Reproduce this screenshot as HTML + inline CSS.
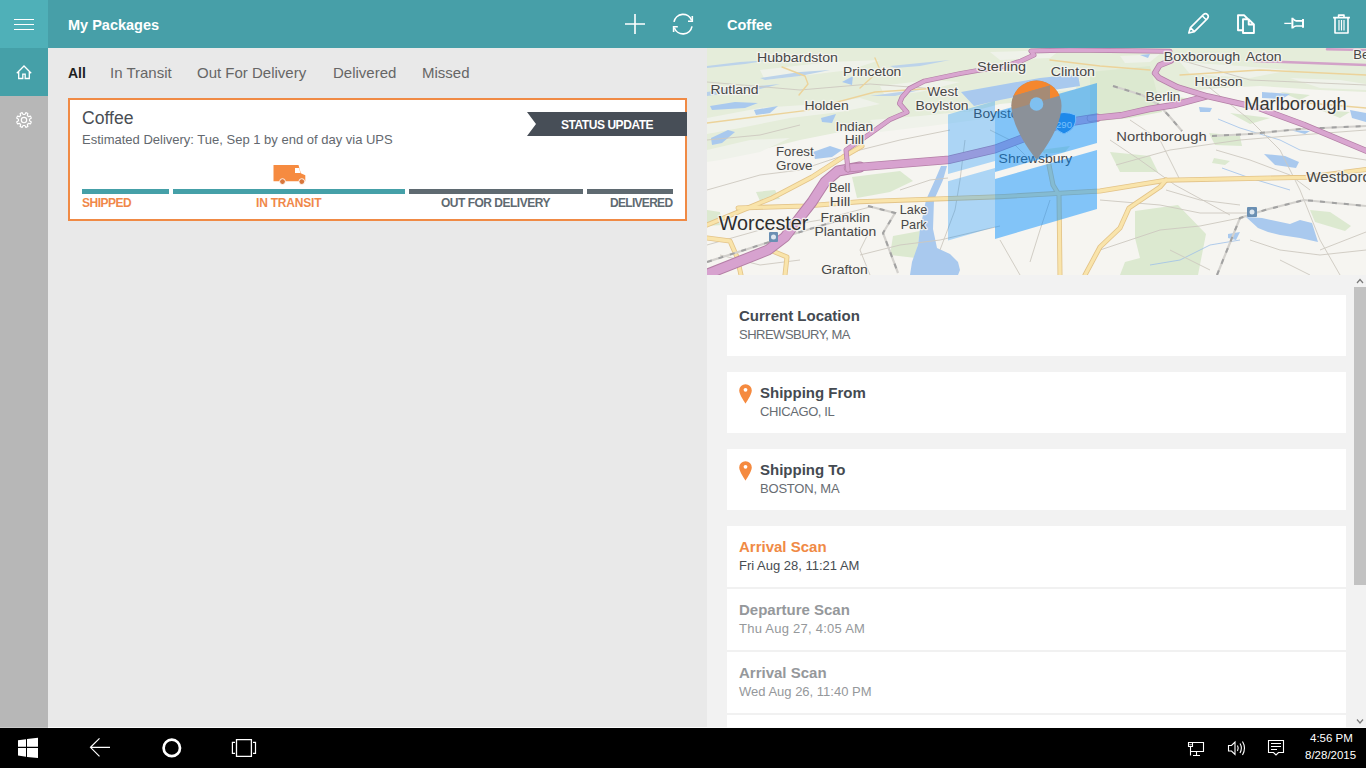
<!DOCTYPE html>
<html><head><meta charset="utf-8">
<style>
*{margin:0;padding:0;box-sizing:border-box}
html,body{width:1366px;height:768px;overflow:hidden;background:#e9e9e9;font-family:"Liberation Sans",sans-serif}
.abs{position:absolute}
.t{position:absolute;white-space:nowrap;line-height:1}
#rail{left:0;top:0;width:48px;height:728px;background:#b7b7b7}
#ham{left:0;top:0;width:48px;height:48px;background:#4fb0b8}
#home{left:0;top:48px;width:48px;height:48px;background:#45a0a8}
#hdr{left:48px;top:0;width:1318px;height:48px;background:#479fa8}
#taskbar{left:0;top:728px;width:1366px;height:40px;background:#000}
#map{left:707px;top:48px;width:659px;height:227px;background:#f4f2ee;overflow:hidden}
#det{left:707px;top:275px;width:659px;height:453px;background:#f2f2f2}
.card{position:absolute;left:727px;width:619px;background:#fff}
.lbl{font-size:15px;font-weight:bold;color:#444a51}
.sub{font-size:13px;color:#676c72}
svg{position:absolute;overflow:visible}
</style></head><body>
<div id="rail" class="abs"></div>
<div id="ham" class="abs"></div>
<div id="home" class="abs"></div>
<div id="hdr" class="abs"></div>
<div id="map" class="abs"></div>
<div id="det" class="abs"></div>
<div id="taskbar" class="abs"></div>
<div class="abs" style="left:48px;top:727px;width:1318px;height:1px;background:#fbfbfb"></div>
<div class="abs" style="left:0;top:727px;width:48px;height:1px;background:#c9c9c9"></div>

<!-- rail icons -->
<svg style="left:0;top:0" width="48" height="140" viewBox="0 0 48 140">
  <g stroke="#fff" stroke-width="1" fill="none">
    <path d="M14 19.5H34M14 24.5H34M14 29.5H34"/>
    <path d="M16.8 73.2L24 66L31.2 73.2M18.7 71.3V78.5H22.8V74.2H25.2V78.5H29.3V71.3" stroke-width="1.3"/>
  </g>
  <g fill="none" stroke="#fff" stroke-width="1.15" stroke-linejoin="round">
    <circle cx="24" cy="120" r="2.7"/>
    <path d="M24.83 114.46 L25.90 112.64 L27.86 113.45 L27.33 115.50 L28.50 116.67 L30.55 116.14 L31.36 118.10 L29.54 119.17 L29.54 120.83 L31.36 121.90 L30.55 123.86 L28.50 123.33 L27.33 124.50 L27.86 126.55 L25.90 127.36 L24.83 125.54 L23.17 125.54 L22.10 127.36 L20.14 126.55 L20.67 124.50 L19.50 123.33 L17.45 123.86 L16.64 121.90 L18.46 120.83 L18.46 119.17 L16.64 118.10 L17.45 116.14 L19.50 116.67 L20.67 115.50 L20.14 113.45 L22.10 112.64 L23.17 114.46Z"/>
  </g>
</svg>

<!-- header text & icons -->
<div class="t" style="left:68px;top:18px;font-size:14.5px;font-weight:bold;color:#fff">My Packages</div>
<div class="t" style="left:727px;top:18px;font-size:14.5px;font-weight:bold;color:#fff">Coffee</div>
<svg style="left:600px;top:0" width="110" height="48" viewBox="600 0 110 48">
  <g stroke="#fff" stroke-width="1.6" fill="none">
    <path d="M625 24H645M635 14V34"/>
    <path d="M691.6 20.2A9.2 9.2 0 0 0 674 21.8M674.3 27.8A9.2 9.2 0 0 0 692 26.4"/>
    <path d="M692.3 16V21.3H688M673.6 32V26.8H677.8" stroke-width="1.6"/>
  </g>
</svg>
<svg style="left:1180px;top:0" width="186" height="48" viewBox="1180 0 186 48">
  <g stroke="#fff" stroke-width="1.5" fill="none" stroke-linejoin="round">
    <path d="M1188.8 33L1190.4 27.6L1203.4 14.6Q1205.5 12.8 1207.5 14.6Q1209.2 16.6 1207.4 18.6L1194.4 31.6Z M1190.4 27.6L1194.4 31.6 M1202.2 15.8L1206.2 19.8" stroke-width="1.6"/>
    <path d="M1243 30.3H1238V15.2H1244L1247.8 19" stroke-width="1.9"/>
    <path d="M1243 19.3H1248.7L1253.9 24.5V33H1243Z M1248.7 19.3V24.5H1253.9" stroke-width="1.9"/>
    <path d="M1284.3 23.4H1291.5" stroke-width="1.3"/>
    <path d="M1292.4 17.8V28.6M1303 18.9V27.8" stroke-width="2"/>
    <path d="M1293 18.8Q1294.6 20.9 1296.2 20.9H1302.3M1293 27.6Q1294.6 26 1296.2 26H1302.3" stroke-width="1.6"/>
    <path d="M1333.1 17.6H1349.9M1338.6 17.6V15.1H1344V17.6M1335 17.6V33H1348V17.6" stroke-width="1.6"/>
    <path d="M1339 20V30.5M1341.5 20V30.5M1344 20V30.5" stroke-width="1.2"/>
  </g>
</svg>

<!-- tabs -->
<div class="t" style="left:68px;top:66px;font-size:14px;font-weight:bold;color:#1e1e1e">All</div>
<div class="t" style="left:110px;top:65px;font-size:15px;color:#666">In Transit</div>
<div class="t" style="left:197px;top:65px;font-size:15px;color:#666">Out For Delivery</div>
<div class="t" style="left:333px;top:65px;font-size:15px;color:#666">Delivered</div>
<div class="t" style="left:422px;top:65px;font-size:15px;color:#666">Missed</div>

<!-- package card -->
<div class="abs" style="left:68px;top:98px;width:619px;height:123px;background:#fff;border:2px solid #f08a45"></div>
<div class="t" style="left:82px;top:110px;font-size:17.6px;color:#494e54">Coffee</div>
<div class="t" style="left:82px;top:133px;font-size:13px;color:#63686e">Estimated Delivery: Tue, Sep 1 by end of day via UPS</div>
<svg style="left:520px;top:108px" width="168" height="32" viewBox="520 108 168 32">
  <path d="M527 112H687V136H527L536 124Z" fill="#474e57"/>
</svg>
<div class="t" style="left:561px;top:119px;font-size:12px;font-weight:bold;color:#fff;letter-spacing:-0.45px">STATUS UPDATE</div>
<div class="abs" style="left:82px;top:189px;width:87px;height:5px;background:#45a0a8"></div>
<div class="abs" style="left:173px;top:189px;width:232px;height:5px;background:#45a0a8"></div>
<div class="abs" style="left:409px;top:189px;width:174px;height:5px;background:#5f6a71"></div>
<div class="abs" style="left:587px;top:189px;width:86px;height:5px;background:#5f6a71"></div>
<div class="t" style="left:82px;top:196.7px;font-size:12px;font-weight:bold;color:#f0884a;letter-spacing:-0.5px">SHIPPED</div>
<div class="t" style="left:256px;top:196.7px;font-size:12px;font-weight:bold;color:#f0884a;letter-spacing:-0.2px">IN TRANSIT</div>
<div class="t" style="left:441px;top:196.7px;font-size:12px;font-weight:bold;color:#5f6a71;letter-spacing:-0.5px">OUT FOR DELIVERY</div>
<div class="t" style="left:610px;top:196.7px;font-size:12px;font-weight:bold;color:#5f6a71;letter-spacing:-0.7px">DELIVERED</div>
<svg style="left:270px;top:160px" width="40" height="28" viewBox="270 160 40 28">
  <path d="M273.5 165.1H298.5L300.8 173.3L305.3 175.3V181.3H273.5Z" fill="#f68b40"/>
  <path d="M295 168H299.3L300.3 172.9H295Z" fill="#fff"/>
  <circle cx="282.5" cy="181.6" r="2.9" fill="#d9773c" stroke="#fff" stroke-width="0.9"/>
  <circle cx="301.8" cy="181.6" r="2.9" fill="#d9773c" stroke="#fff" stroke-width="0.9"/>
</svg>

<!-- MAP -->
<svg id="mapsvg" style="left:707px;top:48px" width="659" height="227" viewBox="707 48 659 227">
<defs>
<clipPath id="mclip"><rect x="707" y="48" width="659" height="227"/></clipPath>
<clipPath id="pinclip"><path d="M1036.5 159.8C1028 149 1011.5 126 1011.5 105.5A25 25 0 0 1 1061.5 105.5C1061.5 126 1045 149 1036.5 159.8Z"/></clipPath>
</defs>
<g clip-path="url(#mclip)">
<rect x="707" y="48" width="659" height="227" fill="#f6f5f1"/>
<!-- broad green -->
<g fill="#e5edda">
<path d="M707 48H1366V92L1320 90L1260 86L1220 88L1180 92L1150 100L1120 118L1080 124L1040 100L1000 104L970 112L930 120L900 128L870 126L840 132L800 140L760 150L707 160Z"/>
</g>
<g fill="#eff2ea">
<path d="M707 118L760 108L820 104L860 98L880 104L840 112L790 118L740 128L707 134Z"/>
<path d="M760 70L830 62L880 60L850 70L800 76L765 80Z"/>
<path d="M880 86L930 80L960 82L920 92L885 96Z"/>
<path d="M707 150L750 140L790 138L760 152L720 160L707 162Z"/>
<path d="M870 120L920 116L960 112L1000 110L990 118L930 126L880 132Z"/>
<path d="M1180 62L1240 66L1290 70L1250 78L1190 74Z"/>
<path d="M1290 78L1340 80L1366 84V90L1320 88Z"/>
<path d="M1120 56L1160 54L1150 62L1125 63Z"/>
<path d="M1030 84L1080 80L1075 90L1040 92Z"/>
<path d="M990 52L1060 50L1050 58L1000 60Z"/>
</g>
<g fill="#dce9d0">
<path d="M1090 72L1150 66L1162 112L1130 118L1090 122Z"/>
<path d="M852 177L900 171L913 181L890 192L857 198Z"/>
<path d="M893 236L920 231L916 258L890 255Z"/>
<path d="M1135 211L1178 205L1206 234L1198 275H1120L1125 262L1140 258L1135 238Z"/>
<path d="M1110 152L1150 156L1158 172L1120 172Z"/>
<path d="M1310 210L1330 212L1351 226L1345 231L1315 222Z"/>
<path d="M1209 133L1240 136L1242 146L1215 145Z"/>
<path d="M1214 158L1230 161L1225 165L1212 163Z"/>
<path d="M707 210L720 212L722 225L707 226Z"/>
<path d="M756 192L775 190L780 199L760 201Z"/>
<path d="M1040 150L1070 146L1065 152L1045 154Z"/>
<path d="M1170 96L1200 100L1190 104Z"/>
<path d="M1230 113L1270 118L1250 124Z"/>
<path d="M1320 110L1350 112L1340 118Z"/>
<path d="M1280 92L1310 95L1300 100Z"/>
</g>
<!-- water -->
<g fill="#a9c9ee">
<path d="M961 92L1000 85L1040 78L1078 74L1080 86L1040 92L1000 100L974 106Z"/>
<path d="M941 166L947 166L943 180L934 200L933 229L937 248L950 254L958 262L960 270L958 275H910L912 262L918 245L920 229L926 200L935 180Z"/>
<path d="M707 92L735 88L758 86L780 84L760 89L730 93L707 96Z" fill="#b8d0ea"/>
<path d="M710 106L735 102L758 103L745 108L712 110Z"/>
<path d="M754 110L778 106L770 113L756 115Z"/>
<path d="M711 138L728 130L735 132L722 143L712 145Z"/>
<path d="M821 118L836 114L832 123L822 122Z"/>
<path d="M813 152L830 146L842 150L832 157L815 159Z"/>
<path d="M842 82L853 76L852 85Z"/>
<path d="M707 66L740 62L770 60L745 64L707 68Z" fill="#bcd3ea"/>
<path d="M760 78L800 72L830 70L800 76L765 80Z" fill="#bcd3ea"/>
<path d="M890 66L930 62L950 60L920 66L895 68Z" fill="#bcd3ea"/>
<path d="M870 96L900 92L920 90L895 96Z" fill="#bcd3ea"/>
<path d="M1246 217L1262 218L1290 224L1300 220L1312 223L1318 242L1300 238L1280 235L1268 232L1258 228Z"/>
<path d="M1264 154L1285 156L1299 162L1296 168L1275 165Z"/>
<path d="M1350 110L1366 113V122L1352 118Z"/>
<path d="M1199 107L1212 108L1210 112L1200 112Z"/>
<path d="M1228 234L1240 232L1236 240L1228 238Z"/>
<path d="M1262 92L1290 94L1282 99L1262 98Z"/>
<path d="M1140 55L1150 54L1148 58Z"/>
<path d="M1290 130L1310 131L1305 134Z"/>
</g>
<g fill="none" stroke="#9ec0ea" stroke-width="0.8">
<path d="M1218 119L1240 128L1280 140L1300 150"/>
<path d="M1222 168L1250 178L1290 190"/>
<path d="M1150 265L1180 260L1210 245L1240 240"/>
</g>
<!-- minor roads -->
<g fill="none" stroke="#cdc8bf" stroke-width="0.9">
<path d="M707 190L760 175L800 170L860 150L900 140L950 130"/>
<path d="M707 245L760 230L820 220L870 207"/>
<path d="M860 255L900 245L940 240L1000 226"/>
<path d="M1100 250L1160 230L1200 226L1240 218"/>
<path d="M1116 165L1170 150L1240 140L1300 135L1366 130"/>
<path d="M1100 200L1160 205L1200 213L1252 213"/>
<path d="M1200 80L1250 120L1280 150L1300 190L1320 240L1340 275"/>
<path d="M1300 150L1366 160"/>
<path d="M1130 120L1160 140L1180 180"/>
<path d="M1000 240L1020 275"/>
<path d="M965 140L960 180L955 210L940 250"/>
<path d="M1180 60L1250 80L1366 85"/>
<path d="M707 82L800 90L870 84L950 90"/>
<path d="M1320 250L1366 232"/>
<path d="M1280 260L1310 275"/>
<path d="M1216 150L1250 160L1290 175L1310 190"/>
<path d="M1166 190L1200 200L1240 205"/>
<path d="M1110 140L1140 160L1175 185L1230 215"/>
<path d="M870 230L860 250L870 275"/>
<path d="M720 255L760 265L800 260"/>
<path d="M900 190L930 180L948 178"/>
<path d="M1050 200L1040 230L1030 262"/>
<path d="M1250 240L1280 250L1320 255L1366 250"/>
<path d="M707 140L760 135L800 125"/>
<path d="M990 130L1010 140L1030 160"/>
<path d="M1170 250L1210 270"/>
</g>
<!-- yellow roads -->
<g fill="none" stroke-linejoin="round" stroke-linecap="round">
<g stroke="#e3c489" stroke-width="5">
<path d="M707 225L772 198L812 177L843 157L862 146"/>
<path d="M738 208L805 206L860 201.7L1000 196.7L1100 191L1166 180.2L1306 177.3L1366 169.5"/>
<path d="M707 238L730 241L737 257L741 275"/>
<path d="M770 250L787 257L785 275"/>
<path d="M1166 180L1160 187L1129 208L1120 228L1100 247L1085 275"/>
<path d="M1049 165L1053 185L1059 195L1060 275"/>
</g>
<g stroke="#f9e4ab" stroke-width="3.3">
<path d="M707 225L772 198L812 177L843 157L862 146"/>
<path d="M738 208L805 206L860 201.7L1000 196.7L1100 191L1166 180.2L1306 177.3L1366 169.5"/>
<path d="M707 238L730 241L737 257L741 275"/>
<path d="M770 250L787 257L785 275"/>
<path d="M1166 180L1160 187L1129 208L1120 228L1100 247L1085 275"/>
<path d="M1049 165L1053 185L1059 195L1060 275"/>
</g>
<g stroke="#ecd39a" stroke-width="1.4">
<path d="M707 123L805 110.6L875 92L940 88"/>
<path d="M799 95L808 84L805 76L782 67"/>
<path d="M1180 75L1260 70L1366 75"/>
<path d="M860 88L880 70L875 58"/>
<path d="M1050 60L1100 66L1150 70"/>
<path d="M1270 100L1320 104L1366 108"/>
</g>
</g>
<!-- rail -->
<g fill="none" stroke="#d3d1cd" stroke-width="2.2">
<path d="M707 262L760 245L800 232L860 214"/>
<path d="M1217 275L1240 218L1265 210L1304 200L1366 206"/>
<path d="M868 206L895 213L883 233L898 273"/>
<path d="M1113 86L1142 95L1159 105L1170 117L1182 131"/>
<path d="M1212 136L1250 134L1300 129L1366 126"/>
</g>
<g fill="none" stroke="#a2a2a2" stroke-width="2" stroke-dasharray="5 7">
<path d="M707 262L760 245L800 232L860 214"/>
<path d="M1217 275L1240 218L1265 210L1304 200L1366 206"/>
<path d="M868 206L895 213L883 233L898 273"/>
<path d="M1113 86L1142 95L1159 105L1170 117L1182 131"/>
<path d="M1212 136L1250 134L1300 129L1366 126"/>
</g>
<!-- highways -->
<g fill="none" stroke-linejoin="round" stroke-linecap="round">
<path d="M700 277L768 250L785 237L798 220L812 202L825 182L838 171L860 167" stroke="#b47fa6" stroke-width="11"/>
<path d="M700 277L768 250L785 237L798 220L812 202L825 182L838 171L860 167" stroke="#d7a2cf" stroke-width="9"/>
<path d="M848 168L860 167L949.6 159.7L995 149L1040 132L1063.7 123L1097 117.7" stroke="#b47fa6" stroke-width="8.5"/>
<path d="M848 168L860 167L949.6 159.7L995 149L1040 132L1063.7 123L1097 117.7" stroke="#d7a2cf" stroke-width="7"/>
<path d="M1090 118.4L1121 115.3L1149 109L1174 105L1205.6 96.6" stroke="#b47fa6" stroke-width="6.5"/>
<path d="M1090 118.4L1121 115.3L1149 109L1174 105L1205.6 96.6" stroke="#d7a2cf" stroke-width="5.2"/>
<path d="M848 170L846 150L870 133.7L889.6 119.7L907 112.2L899.5 103.5L902 97.3L909.5 88.6L924.4 81.1L960 73.6L977 70.6L1006 66L1021 61L1034 55L1031 51L1070 50L1170 51.3" stroke="#b47fa6" stroke-width="5"/>
<path d="M848 170L846 150L870 133.7L889.6 119.7L907 112.2L899.5 103.5L902 97.3L909.5 88.6L924.4 81.1L960 73.6L977 70.6L1006 66L1021 61L1034 55L1031 51L1070 50L1170 51.3" stroke="#d9a6d0" stroke-width="3.6"/>
<path d="M1171 60.6L1159.5 65.3L1154.8 73.1L1158.8 77.8L1177.5 87.2L1207.7 96.3L1257 107.5L1304 124.7L1370 152.5" stroke="#b47fa6" stroke-width="6"/>
<path d="M1171 60.6L1159.5 65.3L1154.8 73.1L1158.8 77.8L1177.5 87.2L1207.7 96.3L1257 107.5L1304 124.7L1370 152.5" stroke="#d9a6d0" stroke-width="4.5"/>
<path d="M1254 61L1366 65M1327 49.2L1366 50" stroke="#d2a2c8" stroke-width="2.5"/>
</g>
<!-- labels -->
<g font-family="Liberation Sans, sans-serif" font-size="13" fill="#474747" stroke="#f6f5f1" stroke-width="2.5" stroke-opacity="0.85" paint-order="stroke" stroke-linejoin="round">
<text x="757" y="61.8" textLength="81" lengthAdjust="spacingAndGlyphs">Hubbardston</text>
<text x="843" y="75.6" textLength="58.3" lengthAdjust="spacingAndGlyphs">Princeton</text>
<text x="977" y="71" textLength="49" lengthAdjust="spacingAndGlyphs">Sterling</text>
<text x="710.5" y="94" textLength="48" lengthAdjust="spacingAndGlyphs">Rutland</text>
<text x="927.3" y="95.5" textLength="30.7" lengthAdjust="spacingAndGlyphs">West</text>
<text x="915.4" y="110" textLength="53.2" lengthAdjust="spacingAndGlyphs">Boylston</text>
<text x="804.4" y="109.8" textLength="44.3" lengthAdjust="spacingAndGlyphs">Holden</text>
<text x="835.6" y="130.6" textLength="37.6" lengthAdjust="spacingAndGlyphs">Indian</text>
<text x="844.8" y="144.4" textLength="19.2" lengthAdjust="spacingAndGlyphs">Hill</text>
<text x="776" y="155.7" textLength="37.6" lengthAdjust="spacingAndGlyphs">Forest</text>
<text x="776" y="169.8" textLength="36.6" lengthAdjust="spacingAndGlyphs">Grove</text>
<text x="828.9" y="191.8" textLength="21.4" lengthAdjust="spacingAndGlyphs">Bell</text>
<text x="829.8" y="206" textLength="20.5" lengthAdjust="spacingAndGlyphs">Hill</text>
<text x="820.6" y="221.8" textLength="49.4" lengthAdjust="spacingAndGlyphs">Franklin</text>
<text x="814.5" y="236.1" textLength="61.8" lengthAdjust="spacingAndGlyphs">Plantation</text>
<text x="899.8" y="214" textLength="27.5" lengthAdjust="spacingAndGlyphs">Lake</text>
<text x="900.7" y="228.5" textLength="26" lengthAdjust="spacingAndGlyphs">Park</text>
<text x="821.2" y="274.4" textLength="46.5" lengthAdjust="spacingAndGlyphs">Grafton</text>
<text x="1050.8" y="75.6" textLength="44.1" lengthAdjust="spacingAndGlyphs">Clinton</text>
<text x="1163.7" y="61" textLength="76.5" lengthAdjust="spacingAndGlyphs">Boxborough</text>
<text x="1245.7" y="61" textLength="35.8" lengthAdjust="spacingAndGlyphs">Acton</text>
<text x="1353.3" y="59">Be</text>
<text x="1194.6" y="86.3" textLength="48.1" lengthAdjust="spacingAndGlyphs">Hudson</text>
<text x="1145.4" y="101" textLength="35.1" lengthAdjust="spacingAndGlyphs">Berlin</text>
<text x="1116.3" y="141.4" textLength="90.3" lengthAdjust="spacingAndGlyphs">Northborough</text>
<text x="1306.3" y="181.8" textLength="90" lengthAdjust="spacingAndGlyphs" font-size="14">Westborough</text>
<text x="718.8" y="230" font-size="19.5" fill="#2e2e2e" textLength="89.6" lengthAdjust="spacingAndGlyphs">Worcester</text>
<text x="1244.2" y="110.2" font-size="17.5" fill="#363636" textLength="102.5" lengthAdjust="spacingAndGlyphs">Marlborough</text>
<text x="973.2" y="117.8" textLength="53" lengthAdjust="spacingAndGlyphs">Boylston</text>
<text x="998.6" y="163.3" textLength="73.6" lengthAdjust="spacingAndGlyphs">Shrewsbury</text>
</g>
<!-- station icons -->
<rect x="1247" y="207" width="10" height="10" rx="1" fill="#6a8fb3"/>
<rect x="1249.5" y="209.5" width="5" height="5" rx="2.5" fill="#dde7f0"/>
<rect x="769" y="232" width="9" height="10" rx="1" fill="#6a8fb3"/>
<rect x="771" y="234.5" width="5" height="5" rx="2.5" fill="#dde7f0"/>
<!-- I-290 shield -->
<path d="M1052.5 115Q1064 110 1075.5 115Q1078 128 1064 134Q1050 128 1052.5 115Z" fill="#3a87d8" stroke="#dfe9f5" stroke-width="1"/>
<text x="1056" y="127.5" font-family="Liberation Sans, sans-serif" font-size="9" fill="#dfeaf7" textLength="16" lengthAdjust="spacingAndGlyphs">290</text>
<!-- overlay -->
<g fill="rgb(0,140,255)">
<path d="M948 114.5L995 101V161L948 174Z M948 181.3L995 168V227L948 240.6Z" fill-opacity="0.3"/>
<path d="M995 112L1097 83V143L995 172Z M995 179L1097 150V209L995 239Z" fill-opacity="0.47"/>
</g>
<!-- pin -->
<path d="M1036.5 159.8C1028 149 1011.5 126 1011.5 105.5A25 25 0 0 1 1061.5 105.5C1061.5 126 1045 149 1036.5 159.8Z" fill="#8b9199"/>
<g clip-path="url(#pinclip)">
<path d="M1005 98.5L1070 79.6V60H1005Z" fill="#f5872e"/>
<path d="M1005 98.5L1050 85.4V98.4L1005 111.5Z" fill="#a68b75"/>
<path d="M1050 85.4L1070 79.6V92.6L1050 98.4Z" fill="#f5872e"/>
</g>
<circle cx="1036.5" cy="104" r="6.8" fill="#7fc0f0"/>
</g>

</svg>

<!-- details cards -->
<div class="card" style="top:295px;height:61px"></div>
<div class="t lbl" style="left:739px;top:308px">Current Location</div>
<div class="t sub" style="left:739px;top:328px;letter-spacing:-0.5px">SHREWSBURY, MA</div>

<div class="card" style="top:372px;height:61px"></div>
<div class="t lbl" style="left:760px;top:385px">Shipping From</div>
<div class="t sub" style="left:760px;top:405px;letter-spacing:-0.4px">CHICAGO, IL</div>

<div class="card" style="top:449px;height:61px"></div>
<div class="t lbl" style="left:760px;top:462px">Shipping To</div>
<div class="t sub" style="left:760px;top:482px;letter-spacing:-0.2px">BOSTON, MA</div>

<svg style="left:735px;top:380px" width="24" height="110" viewBox="735 380 24 110">
  <path d="M745.5 384.2A6.3 6.3 0 0 0 739.2 390.5C739.2 394.5 745.5 403.6 745.5 403.6C745.5 403.6 751.8 394.5 751.8 390.5A6.3 6.3 0 0 0 745.5 384.2Z" fill="#f58a3f"/>
  <circle cx="745.5" cy="389.8" r="1.9" fill="#fff"/>
  <path d="M745.5 461.2A6.3 6.3 0 0 0 739.2 467.5C739.2 471.5 745.5 480.6 745.5 480.6C745.5 480.6 751.8 471.5 751.8 467.5A6.3 6.3 0 0 0 745.5 461.2Z" fill="#f58a3f"/>
  <circle cx="745.5" cy="466.8" r="1.9" fill="#fff"/>
</svg>

<div class="card" style="top:526px;height:61px"></div>
<div class="abs" style="left:727px;top:587px;width:619px;height:2px;background:#f1f1f1"></div>
<div class="card" style="top:589px;height:61px"></div>
<div class="abs" style="left:727px;top:650px;width:619px;height:2px;background:#f1f1f1"></div>
<div class="card" style="top:652px;height:61px"></div>
<div class="abs" style="left:727px;top:713px;width:619px;height:2px;background:#f1f1f1"></div>
<div class="card" style="top:715px;height:13px"></div>
<div class="t lbl" style="left:739px;top:539px;color:#f08a45">Arrival Scan</div>
<div class="t sub" style="left:739px;top:559px;color:#474c52">Fri Aug 28, 11:21 AM</div>
<div class="t lbl" style="left:739px;top:602px;color:#95989b">Departure Scan</div>
<div class="t sub" style="left:739px;top:622px;color:#95989b;letter-spacing:0.25px">Thu Aug 27, 4:05 AM</div>
<div class="t lbl" style="left:739px;top:665px;color:#95989b">Arrival Scan</div>
<div class="t sub" style="left:739px;top:685px;color:#95989b">Wed Aug 26, 11:40 PM</div>

<!-- scrollbar -->
<div class="abs" style="left:1354px;top:287px;width:12px;height:298px;background:#c2c2c2"></div>
<svg style="left:1354px;top:275px" width="12" height="453" viewBox="1354 275 12 453">
  <path d="M1357 283L1360 279.5L1363 283M1357 719.5L1360 723L1363 719.5" stroke="#7a7a7a" stroke-width="1.2" fill="none"/>
</svg>

<!-- taskbar icons -->
<svg style="left:0;top:728px" width="1366" height="40" viewBox="0 728 1366 40">
  <g fill="#fff">
    <path d="M18 740.3L26 739.3V746.8H18Z M27 739.1L38 737.8V746.8H27Z M18 748H26V756.8L18 755.5Z M27 748H38V758L27 757Z"/>
  </g>
  <g stroke="#fff" fill="none">
    <path d="M90.5 747.3H110M99.5 738.3L90.5 747.3L99.5 756.3" stroke-width="1.2"/>
    <circle cx="171.8" cy="747.9" r="8.2" stroke-width="2.7"/>
    <path d="M236.5 739.6H251.4V756.4H236.5Z" stroke-width="1.3"/>
    <path d="M235 742.4H232.4V753.4H235M253 742.4H255.5V753.4H253" stroke-width="1.2"/>
    <path d="M1192.5 742.5H1203.5V751.5H1190.5M1190.5 746.5V755.5M1193 755.5H1200M1196.5 751.5V755.5M1188.5 742.5H1192.5V746.5H1188.5Z" stroke-width="1.1"/><path d="M1189.6 744L1190.5 745.2L1191.5 744" stroke-width="0.8"/>
    <path d="M1228.5 745.5H1231.5L1235 742V754.5L1231.5 751H1228.5Z" stroke-width="1.1"/>
    <path d="M1237.5 745.5Q1239 748.2 1237.5 751M1240 743.5Q1242.8 748.2 1240 753M1242.5 741.5Q1246.5 748.2 1242.5 755" stroke-width="1.1"/>
    <path d="M1268.5 740.5H1283.5V752.5H1278.5L1276 755L1273.5 752.5H1268.5Z M1271 743.5H1281M1271 746.5H1281M1271 749.5H1277" stroke-width="1.1"/>
  </g>
</svg>
<div class="t" style="left:1310px;top:733px;font-size:11.5px;color:#fff">4:56 PM</div>
<div class="t" style="left:1305px;top:750px;font-size:11.5px;color:#fff">8/28/2015</div>

</body></html>
